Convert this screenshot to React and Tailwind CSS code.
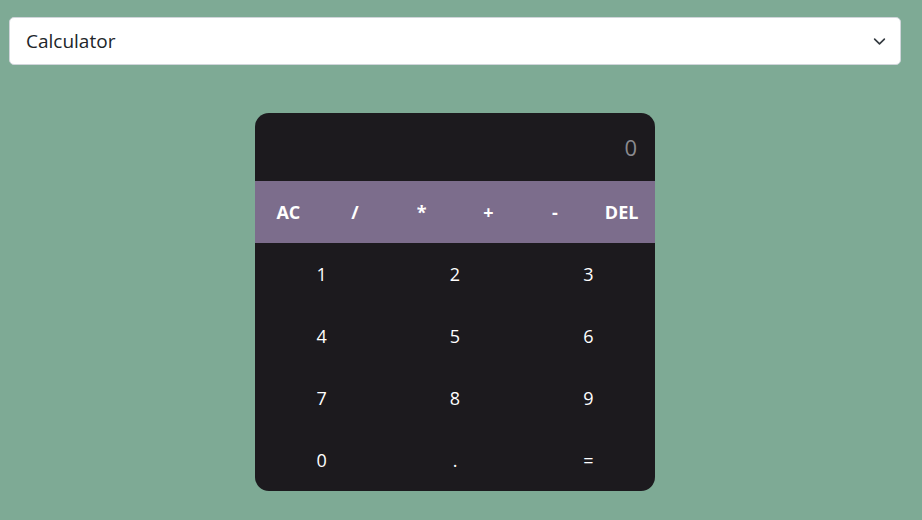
export default function App() {
  const ops = ["AC", "/", "*", "+", "-", "DEL"];
  const nums = ["1", "2", "3", "4", "5", "6", "7", "8", "9", "0", ".", "="];
  return (
    <div className="w-[922px] h-[520px] bg-[#7eaa95] pt-[17px] pl-[9px]" style={{ fontFamily: '"Open Sans", "Noto Sans", sans-serif' }}>
      <div className="w-[892px]">
        <div className="h-[48px] bg-white rounded-[5px] border border-[#d0d5da] flex items-center justify-between pl-[16px] pr-[14px]">
          <span className="text-[19px] text-[#212529]">Calculator</span>
          <svg width="13" height="13" viewBox="0 0 16 16" fill="none" stroke="#343a40" strokeWidth="2" strokeLinecap="round" strokeLinejoin="round">
            <path d="M2 5l6 6 6-6" />
          </svg>
        </div>
        <div className="flex justify-center mt-[48px]">
          <div className="w-[400px] h-[378px] bg-[#1c1a1e] rounded-[14px] overflow-hidden flex flex-col">
            <div className="h-[68px] flex items-center justify-end pr-[18px] text-[22px] text-[#8a8a8f]">0</div>
            <div className="h-[62px] bg-[#7c6d8c] grid grid-cols-6 items-center">
              {ops.map((o) => (
                <div key={o} className="text-center text-white font-bold text-[18px]">{o}</div>
              ))}
            </div>
            <div className="flex-1 grid grid-cols-3 grid-rows-4">
              {nums.map((n) => (
                <div key={n} className="flex items-center justify-center text-white text-[18px]">{n}</div>
              ))}
            </div>
          </div>
        </div>
      </div>
    </div>
  );
}
